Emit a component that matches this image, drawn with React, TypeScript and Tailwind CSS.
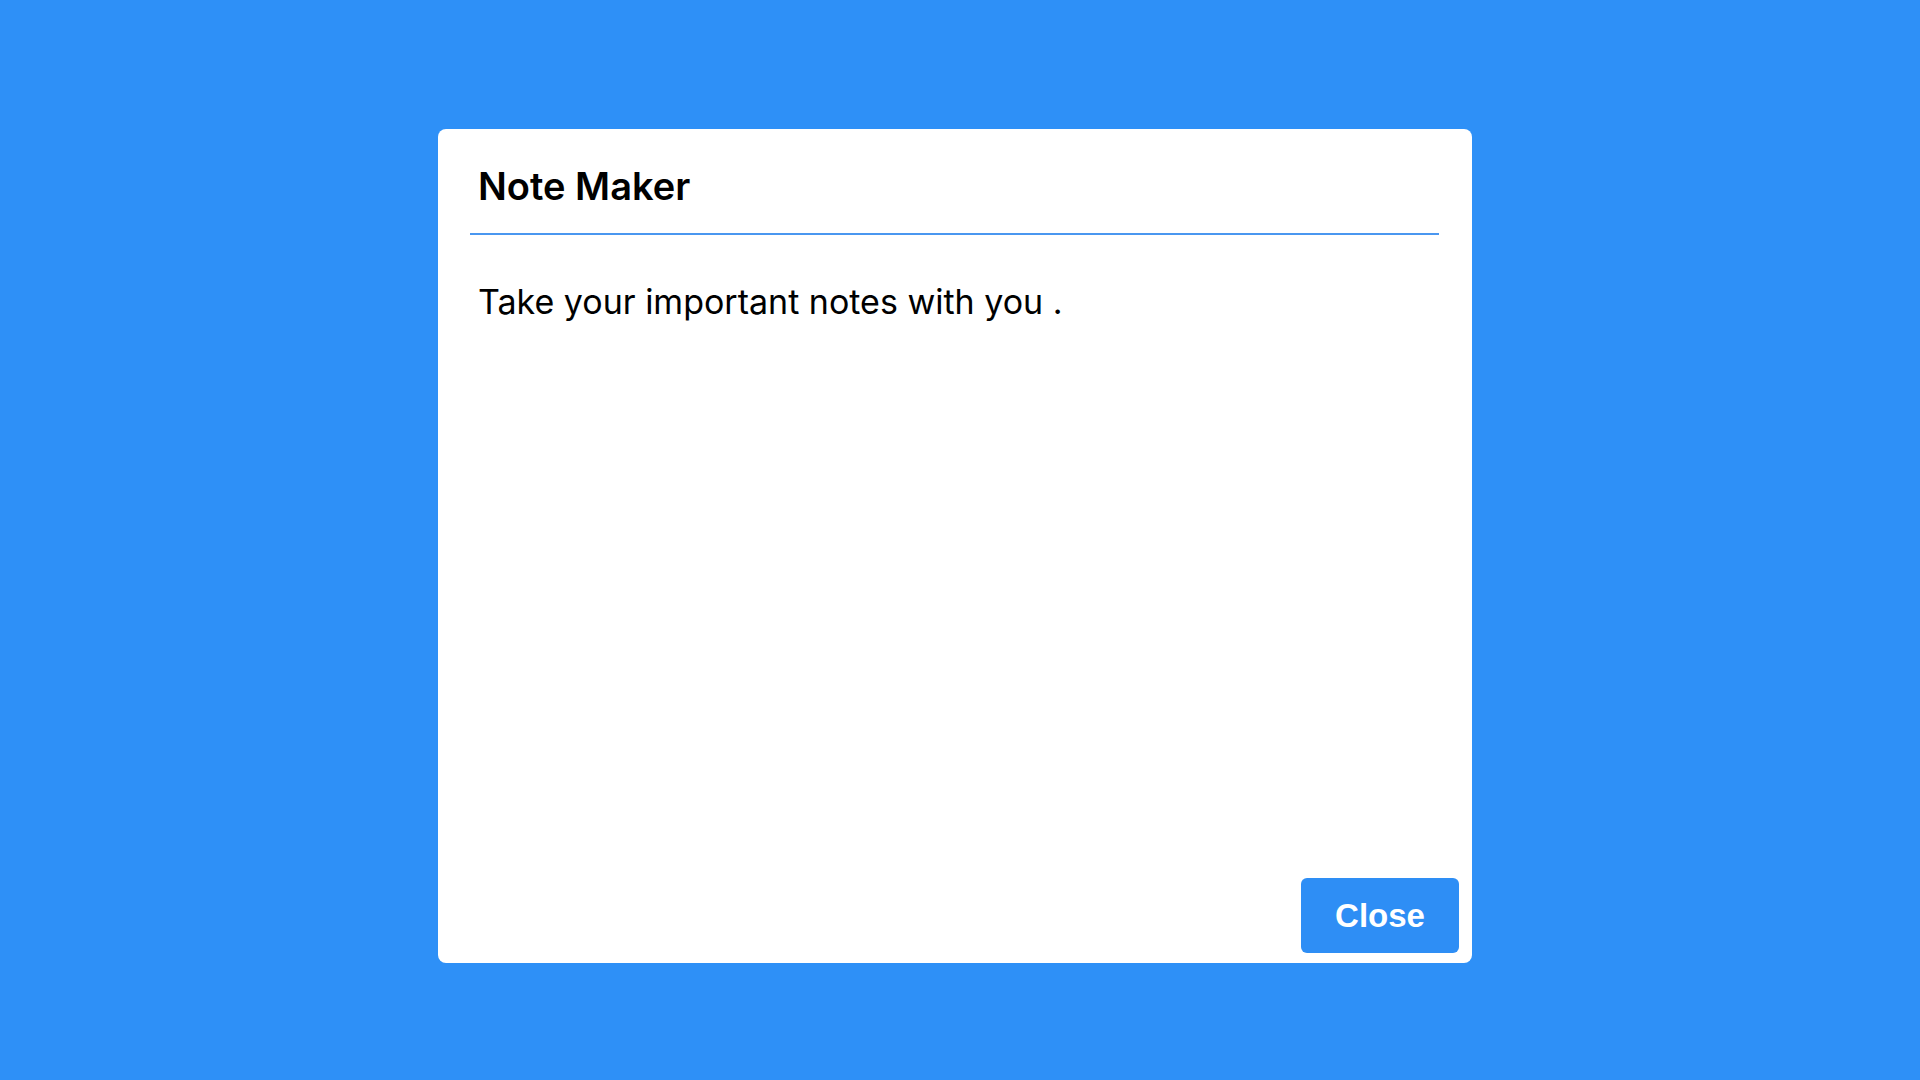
import React from 'react';

export default function App() {
  return (
    <div className="min-h-screen w-full bg-[#2e90f7] pt-[129px] pl-[438px]" style={{ fontFamily: 'Inter, "Noto Sans", sans-serif' }}>
      <div className="w-[1034px] h-[834px] bg-white rounded-lg flex flex-col">
        <div className="mx-[32px] mr-[33px] border-b-2 border-[#4a97f0] pt-[38px] pb-[28px] px-2">
          <h1 className="text-[38px] leading-none font-semibold text-black">Note Maker</h1>
        </div>
        <div className="px-[40px] pt-[50px] flex-1">
          <p className="text-[34px] leading-none text-black">Take your important notes with you .</p>
        </div>
        <div className="flex justify-end pr-[13px] pb-[10px]">
          <button
            className="w-[158px] h-[75px] rounded-md bg-[#2e8ef5] text-white text-[33px] font-bold"
            style={{ fontFamily: '"Liberation Sans", Arial, sans-serif' }}
          >
            Close
          </button>
        </div>
      </div>
    </div>
  );
}
